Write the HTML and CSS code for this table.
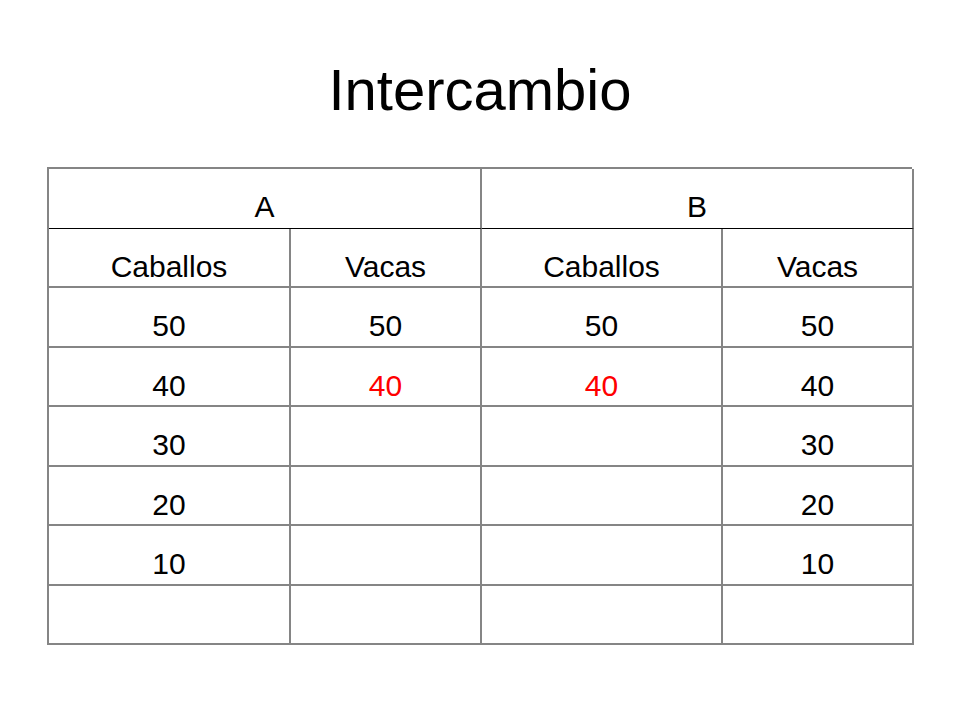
FILE: index.html
```html
<!DOCTYPE html>
<html lang="es">
<head>
<meta charset="utf-8">
<title>Intercambio</title>
<link rel="stylesheet" href="styles.css">
</head>
<body>
<main class="slide">
  <h1 class="title">Intercambio</h1>
  <div class="grid">
    <div class="cell head span2">A</div>
    <div class="cell head span2">B</div>
    <div class="cell">Caballos</div>
    <div class="cell">Vacas</div>
    <div class="cell">Caballos</div>
    <div class="cell">Vacas</div>
    <div class="cell">50</div>
    <div class="cell">50</div>
    <div class="cell">50</div>
    <div class="cell">50</div>
    <div class="cell">40</div>
    <div class="cell red">40</div>
    <div class="cell red">40</div>
    <div class="cell">40</div>
    <div class="cell">30</div>
    <div class="cell"></div>
    <div class="cell"></div>
    <div class="cell">30</div>
    <div class="cell">20</div>
    <div class="cell"></div>
    <div class="cell"></div>
    <div class="cell">20</div>
    <div class="cell">10</div>
    <div class="cell"></div>
    <div class="cell"></div>
    <div class="cell">10</div>
    <div class="cell"></div>
    <div class="cell"></div>
    <div class="cell"></div>
    <div class="cell"></div>
  </div>
</main>
</body>
</html>
```

FILE: styles.css
```css
html, body {
  margin: 0;
  padding: 0;
  background: #ffffff;
}

body {
  font-family: "Liberation Sans", Arial, sans-serif;
  color: #000000;
}

.slide {
  width: 960px;
  height: 720px;
  padding-top: 57px;
  box-sizing: border-box;
}

.title {
  margin: 0;
  font-weight: normal;
  font-size: 58px;
  line-height: 66px;
  text-align: center;
}

.grid {
  margin: 44px 0 0 47px;
  display: grid;
  grid-template-columns: 242px 191px 241px 191px;
  grid-auto-rows: 59.5px;
  width: 865px;
  box-sizing: border-box;
  border-top: 2px solid #858585;
  border-left: 2px solid #858585;
}

.cell {
  box-sizing: border-box;
  border-right: 2px solid #858585;
  border-bottom: 2px solid #858585;
  font-size: 30px;
  line-height: 34px;
  padding-top: 21px;
  text-align: center;
}

.head {
  border-bottom: 1px solid #000000;
}

.span2 {
  grid-column: span 2;
}

.red {
  color: #ff0000;
}
```
